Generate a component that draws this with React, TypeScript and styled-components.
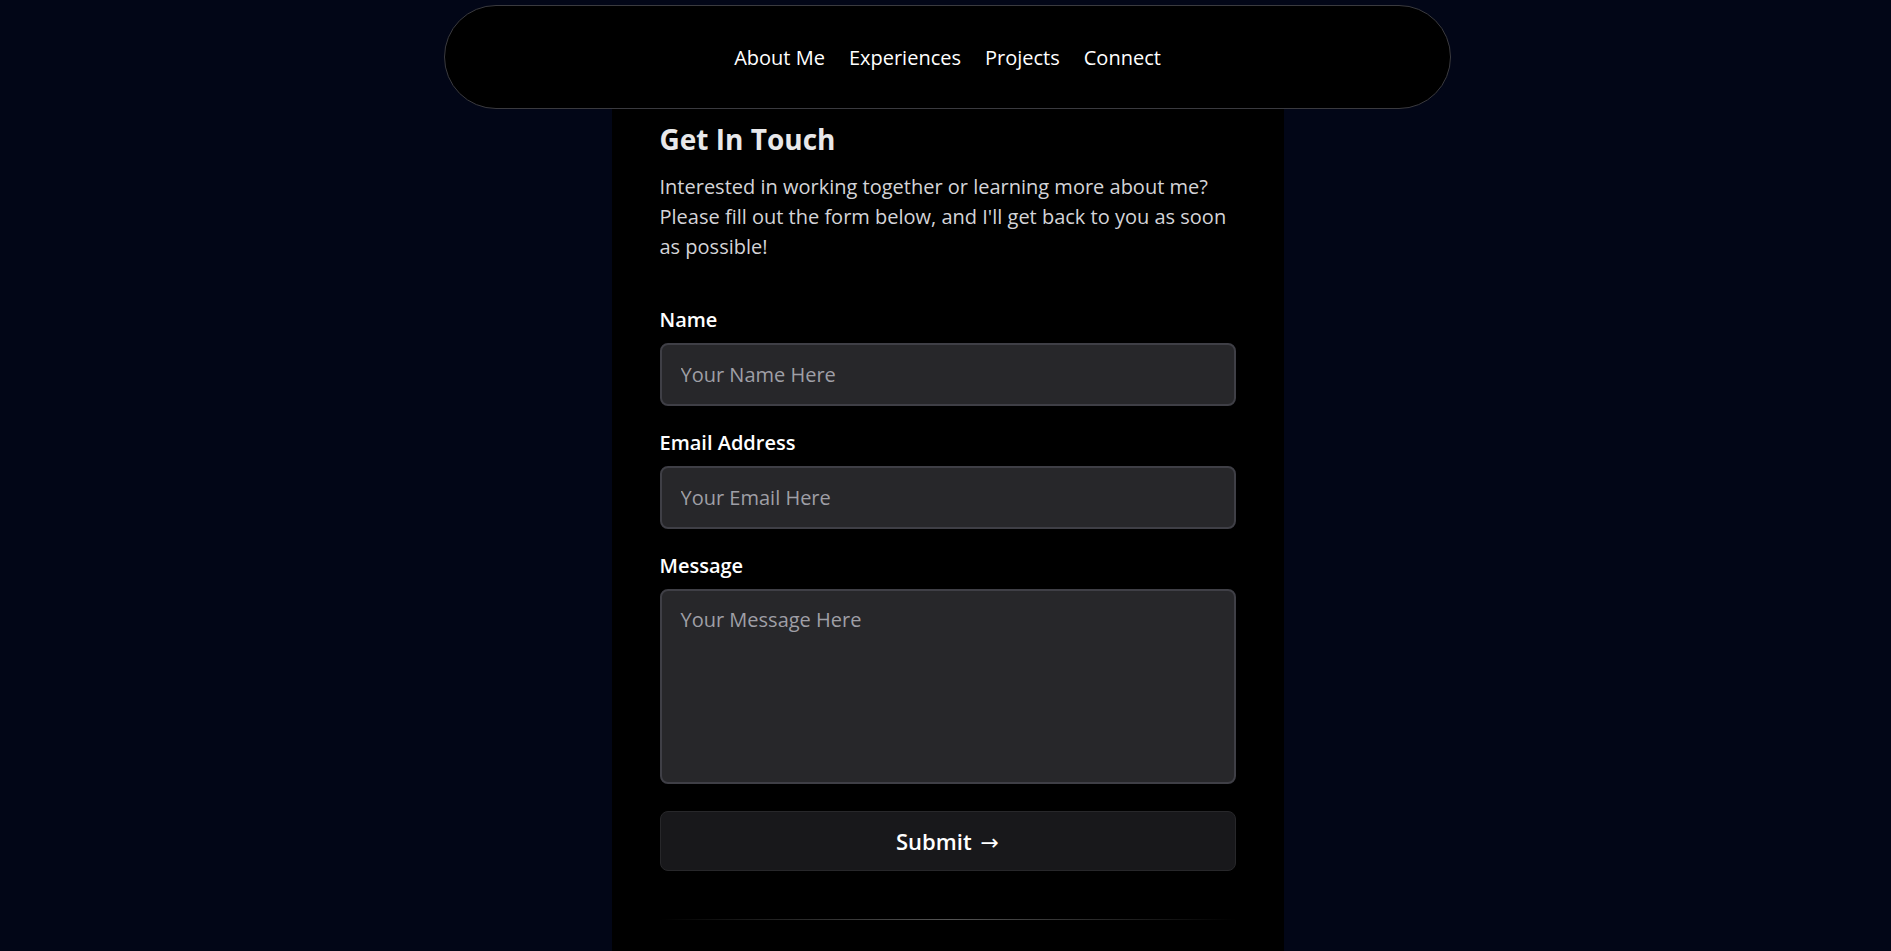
import React from 'react';
import styled, { createGlobalStyle } from 'styled-components';

const GlobalStyle = createGlobalStyle`
  body {
    margin: 0;
    background: #020617;
    font-family: 'Open Sans', 'Noto Sans', sans-serif;
    color: #fff;
  }
  * {
    box-sizing: border-box;
  }
`;

const links = ['About Me', 'Experiences', 'Projects', 'Connect'];

function App() {
  return (
    <Page>
      <GlobalStyle />
      <NavBar>
        {links.map((l) => (
          <NavLink key={l} href='#'>
            {l}
          </NavLink>
        ))}
      </NavBar>
      <Panel>
        <Title>Get In Touch</Title>
        <Intro>
          Interested in working together or learning more about me? Please fill out the form below, and
          I'll get back to you as soon as possible!
        </Intro>
        <Form onSubmit={(e) => e.preventDefault()}>
          <Field>
            <Label htmlFor='name'>Name</Label>
            <Input id='name' type='text' placeholder='Your Name Here' />
          </Field>
          <Field>
            <Label htmlFor='email'>Email Address</Label>
            <Input id='email' type='email' placeholder='Your Email Here' />
          </Field>
          <Field>
            <Label htmlFor='message'>Message</Label>
            <TextArea id='message' placeholder='Your Message Here' />
          </Field>
          <Submit type='submit'>
            Submit<Arrow>→</Arrow>
          </Submit>
        </Form>
        <Divider />
      </Panel>
    </Page>
  );
}

export default App;

const Page = styled.div`
  display: flex;
  flex-direction: column;
  align-items: center;
  padding-top: 5px;
  min-height: 100vh;
`;

const NavBar = styled.nav`
  position: sticky;
  top: 5px;
  z-index: 10;
  width: 1007px;
  height: 104px;
  padding-top: 2px;
  display: flex;
  justify-content: center;
  align-items: center;
  gap: 24px;
  background: #000;
  border: 1px solid #3a3a3f;
  border-radius: 999px;
  margin-left: 4px;
`;

const NavLink = styled.a`
  color: #fff;
  text-decoration: none;
  font-size: 20px;
  line-height: 28px;
`;

const Panel = styled.main`
  width: 672px;
  background: #000;
  padding: 12px 48px 120px;
  margin-left: 4px;
`;

const Title = styled.h1`
  margin: 0;
  font-size: 28px;
  line-height: 36px;
  font-weight: 700;
  color: #e8e8ea;
`;

const Intro = styled.p`
  margin: 15px 0 0;
  font-size: 20px;
  line-height: 30px;
  color: #d4d4d8;
`;

const Form = styled.form`
  display: flex;
  flex-direction: column;
  gap: 23px;
  margin-top: 44px;
`;

const Field = styled.div`
  display: flex;
  flex-direction: column;
  gap: 9px;
`;

const Label = styled.label`
  font-size: 20px;
  line-height: 28px;
  font-weight: 600;
  color: #fff;
`;

const Input = styled.input`
  width: 100%;
  height: 63px;
  padding: 0 19px;
  background: #27272a;
  border: 2px solid #3f3f46;
  border-radius: 8px;
  color: #fff;
  font-family: inherit;
  font-size: 20px;
  outline: none;
  &::placeholder {
    color: #9f9fa6;
  }
`;

const TextArea = styled.textarea`
  width: 100%;
  height: 195px;
  padding: 15px 19px;
  background: #27272a;
  border: 2px solid #3f3f46;
  border-radius: 8px;
  color: #fff;
  font-family: inherit;
  font-size: 20px;
  line-height: 28px;
  resize: none;
  outline: none;
  &::placeholder {
    color: #9f9fa6;
  }
`;

const Submit = styled.button`
  margin-top: 4px;
  height: 60px;
  width: 100%;
  background: #18181b;
  border: 1px solid #27272a;
  border-radius: 8px;
  color: #fff;
  font-family: inherit;
  font-size: 22px;
  font-weight: 600;
  cursor: pointer;
`;

const Arrow = styled.span`
  margin-left: 9px;
  font-family: 'DejaVu Sans', sans-serif;
  font-size: 22px;
  font-weight: 400;
`;

const Divider = styled.div`
  margin-top: 48px;
  height: 1px;
  background: linear-gradient(to right, transparent, #555 50%, transparent);
`;
